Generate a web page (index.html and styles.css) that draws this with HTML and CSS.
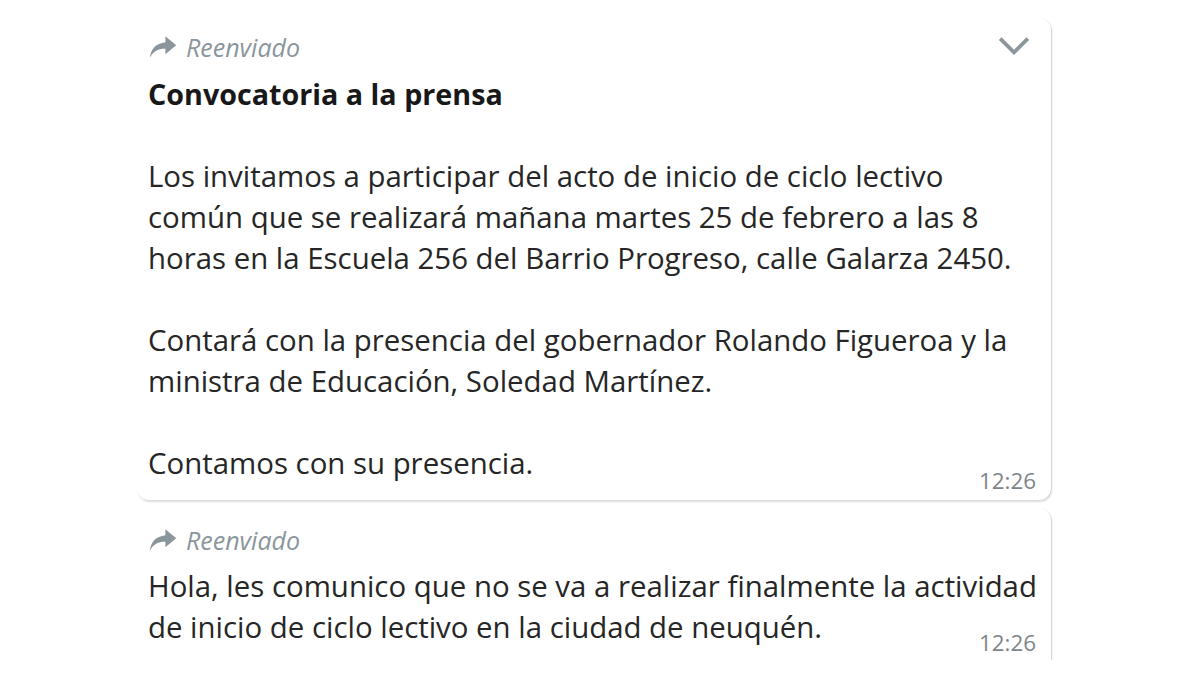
FILE: index.html
```html
<!DOCTYPE html>
<html lang="es">
<head>
    <meta charset="UTF-8">
    <title>Reenviado</title>
    <link rel="stylesheet" href="styles.css">
</head>
<body>
    <div class="chat">
        <div class="bubble">
            <div class="forwarded">
                <svg class="fwd-icon" viewBox="0 0 24 20"><path d="M14 1 L23 8.5 L14 16 L14 11.5 C8 11.5 4 13.5 1 19 C2 11.5 6 7 14 6 Z"/></svg>
                <span>Reenviado</span>
            </div>
            <span class="chevron">
                <svg viewBox="0 0 32 20"><path d="M3 3 L16 16 L29 3" /></svg>
            </span>
            <div class="text">
                <strong>Convocatoria a la prensa</strong><br>
                <br>
                Los invitamos a participar del acto de inicio de ciclo lectivo<br>
                común que se realizará mañana martes 25 de febrero a las 8<br>
                horas en la Escuela 256 del Barrio Progreso, calle Galarza 2450.<br>
                <br>
                Contará con la presencia del gobernador Rolando Figueroa y la<br>
                ministra de Educación, Soledad Martínez.<br>
                <br>
                Contamos con su presencia.
            </div>
            <span class="time">12:26</span>
        </div>

        <div class="bubble second">
            <div class="forwarded">
                <svg class="fwd-icon" viewBox="0 0 24 20"><path d="M14 1 L23 8.5 L14 16 L14 11.5 C8 11.5 4 13.5 1 19 C2 11.5 6 7 14 6 Z"/></svg>
                <span>Reenviado</span>
            </div>
            <div class="text">
                Hola, les comunico que no se va a realizar finalmente la actividad<br>
                de inicio de ciclo lectivo en la ciudad de neuquén.
            </div>
            <span class="time">12:26</span>
        </div>
    </div>
</body>
</html>
```

FILE: styles.css
```css
body {
    margin: 0;
    background-color: #ffffff;
    font-family: "Open Sans", "Noto Sans", sans-serif;
    color: #262626;
    overflow: hidden;
}

.chat {
    display: flex;
    flex-direction: column;
    gap: 8px;
    padding: 18px 0 0 137px;
    width: 914px;
}

.bubble {
    position: relative;
    background-color: #ffffff;
    border-radius: 12px;
    padding: 12px 11px 16px 11px;
    box-shadow: 1px 2px 2px rgba(0, 0, 0, 0.14), 1px 0 0 rgba(0, 0, 0, 0.06);
}

.bubble .text {
    margin-top: 9px;
}

.second {
    padding-top: 15px;
    padding-bottom: 12px;
    border-bottom-left-radius: 0;
    border-bottom-right-radius: 0;
}

.second .text {
    margin-top: 9px;
}

.forwarded {
    display: flex;
    align-items: center;
    gap: 8px;
    font-style: italic;
    font-size: 25px;
    color: #8b969c;
    height: 34px;
}

.fwd-icon {
    width: 30px;
    height: 24px;
    fill: #8b969c;
}

.chevron {
    position: absolute;
    top: 17px;
    right: 20px;
    display: flex;
    width: 34px;
    height: 22px;
}

.chevron svg {
    width: 34px;
    height: 22px;
    fill: none;
    stroke: #8b969c;
    stroke-width: 3.5;
}

.text {
    font-size: 29.4px;
    line-height: 41px;
    white-space: nowrap;
}

.text strong {
    font-weight: 700;
    font-size: 28.7px;
    color: #181818;
}

.time {
    position: absolute;
    right: 15px;
    bottom: 4px;
    font-size: 22.4px;
    color: #7e8589;
}

.second .time {
    bottom: 2px;
}
```
